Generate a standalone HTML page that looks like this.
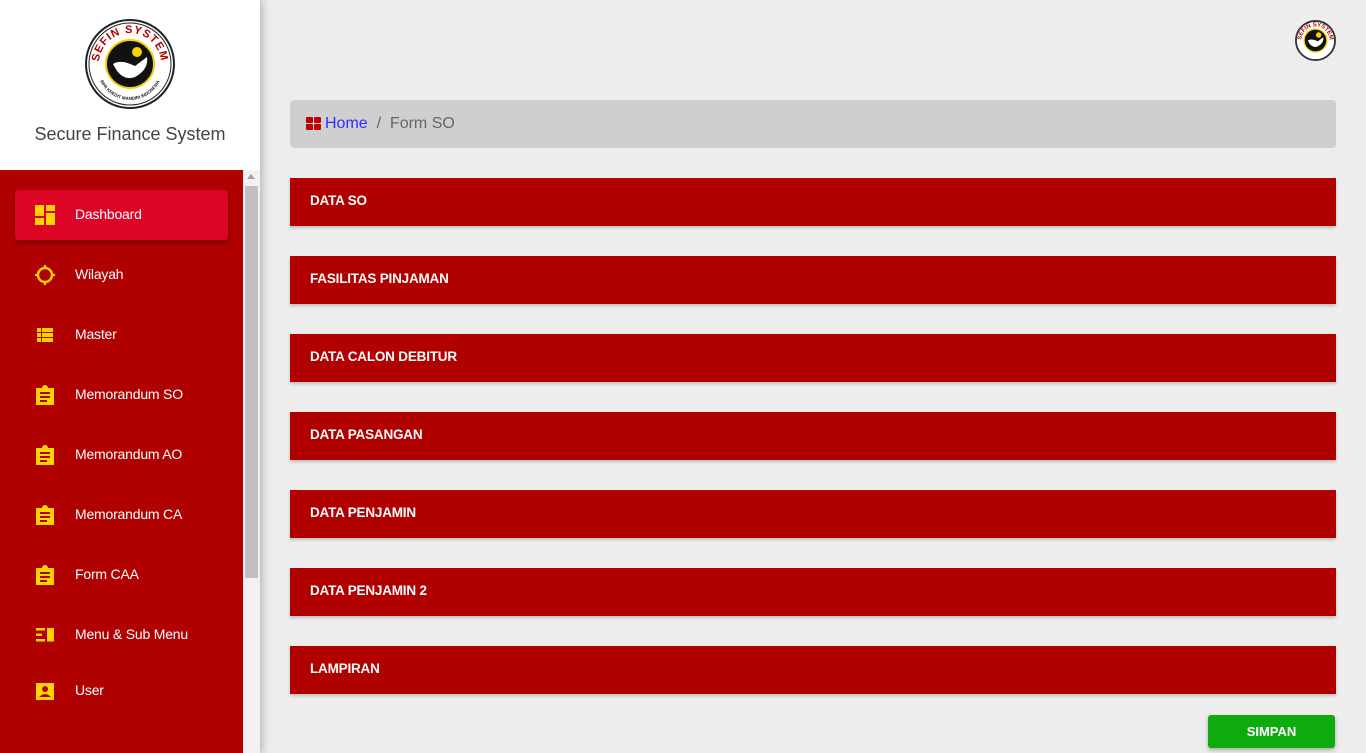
<!DOCTYPE html>
<html><head><meta charset="utf-8">
<style>
*{margin:0;padding:0;box-sizing:border-box}
body{width:1366px;height:753px;overflow:hidden;background:#ededed;font-family:"Liberation Sans",sans-serif;position:relative}
.side{position:absolute;left:0;top:0;width:260px;height:753px;background:#fff;box-shadow:2px 0 8px rgba(0,0,0,.25)}
.title{position:absolute;top:124px;left:0;width:260px;text-align:center;font-size:18px;color:#444}
.menu{position:absolute;top:170px;left:0;width:243px;height:583px;background:#b00000}
.track{position:absolute;top:170px;left:243px;width:17px;height:583px;background:#f1f1f1}
.thumb{position:absolute;top:186px;left:245px;width:13px;height:392px;background:#c1c1c1}
.arrow{position:absolute;top:174px;left:247px;width:0;height:0;border-left:4px solid transparent;border-right:4px solid transparent;border-bottom:5px solid #a3a3a3}
.item{position:absolute;left:15px;width:213px;height:50px;color:#fff;font-size:14px;line-height:48px;padding-left:60px;letter-spacing:-0.2px}
.item.active{background:#dc0525;border-radius:3px;box-shadow:0 3px 5px rgba(0,0,0,.3)}
.item svg{position:absolute;left:20px;top:15px}
.bc{position:absolute;left:290px;top:100px;width:1046px;height:48px;background:#cfcfcf;border-radius:4px;font-size:16px;line-height:48px;padding-left:35px;color:#666}
.bc a{color:#2f2fff;text-decoration:none}
.panel{position:absolute;left:290px;width:1046px;height:48px;background:#b00000;color:#fff;font-weight:bold;font-size:13.5px;line-height:46px;padding-left:20px;box-shadow:0 2px 3px rgba(0,0,0,.2);letter-spacing:-0.2px}
.btn{position:absolute;left:1208px;top:715px;width:127px;height:33px;background:#0eab0e;border-radius:3px;color:#fff;font-weight:bold;font-size:13px;text-align:center;line-height:33px;box-shadow:0 2px 4px rgba(0,0,0,.3)}
</style></head><body>
<div class="side">
<svg style="position:absolute;left:85px;top:19px" width="90" height="90" viewBox="0 0 90 90">
<defs><path id="arc" d="M14 45 A31 31 0 0 1 76 45"/><path id="arc2" d="M12 48 A33 33 0 0 0 78 48"/></defs>
<circle cx="45" cy="45" r="44" fill="#fff" stroke="#222" stroke-width="2"/>
<circle cx="45" cy="45" r="41" fill="none" stroke="#222" stroke-width="1"/>
<circle cx="45" cy="45" r="24" fill="#111" stroke="#f3d400" stroke-width="2"/>
<circle cx="52" cy="33" r="5" fill="#f3d400"/>
<path d="M28 45 Q36 40 50 47 L62 38 Q64 50 50 58 Q40 62 32 52 Z" fill="#fff"/>
<text font-size="11" font-weight="bold" fill="#b00000" font-family="Liberation Sans" letter-spacing="1"><textPath href="#arc" startOffset="50%" text-anchor="middle">SEFIN SYSTEM</textPath></text>
<text font-size="4.5" font-weight="bold" fill="#222" font-family="Liberation Sans"><textPath href="#arc2" startOffset="50%" text-anchor="middle">BPR KREDIT MANDIRI INDONESIA</textPath></text>
</svg>
<div class="title">Secure Finance System</div>
</div>
<div class="menu"></div>
<div class="track"></div><div class="thumb"></div><div class="arrow"></div>

<div class="item active" style="top:190px"><svg width="20" height="20" viewBox="0 0 20 20"><g fill="#ffd400"><rect x="0" y="0" width="9" height="11"/><rect x="11" y="0" width="9" height="6"/><rect x="11" y="8" width="9" height="12"/><rect x="0" y="13" width="9" height="7"/></g></svg>Dashboard</div>
<div class="item" style="top:250px"><svg width="20" height="20" viewBox="0 0 20 20"><circle cx="10" cy="10" r="7" fill="none" stroke="#ffd400" stroke-width="2.4"/><g stroke="#ffd400" stroke-width="2.2"><line x1="10" y1="0" x2="10" y2="3"/><line x1="10" y1="17" x2="10" y2="20"/><line x1="0" y1="10" x2="3" y2="10"/><line x1="17" y1="10" x2="20" y2="10"/></g></svg>Wilayah</div>
<div class="item" style="top:310px"><svg width="20" height="20" viewBox="0 0 20 20"><g fill="#ffd400"><rect x="2" y="3" width="4" height="4"/><rect x="7" y="3" width="11" height="4"/><rect x="2" y="8" width="4" height="4"/><rect x="7" y="8" width="11" height="4"/><rect x="2" y="13" width="4" height="4"/><rect x="7" y="13" width="11" height="4"/></g></svg>Master</div>
<div class="item" style="top:370px"><svg width="20" height="20" viewBox="0 0 20 20"><path d="M1 3h6a3 3 0 0 1 6 0h6v17H1z" fill="#ffd400"/><g fill="#b00000"><rect x="5" y="7" width="10" height="2"/><rect x="5" y="11" width="10" height="2"/><rect x="5" y="15" width="7" height="2"/></g></svg>Memorandum SO</div>
<div class="item" style="top:430px"><svg width="20" height="20" viewBox="0 0 20 20"><path d="M1 3h6a3 3 0 0 1 6 0h6v17H1z" fill="#ffd400"/><g fill="#b00000"><rect x="5" y="7" width="10" height="2"/><rect x="5" y="11" width="10" height="2"/><rect x="5" y="15" width="7" height="2"/></g></svg>Memorandum AO</div>
<div class="item" style="top:490px"><svg width="20" height="20" viewBox="0 0 20 20"><path d="M1 3h6a3 3 0 0 1 6 0h6v17H1z" fill="#ffd400"/><g fill="#b00000"><rect x="5" y="7" width="10" height="2"/><rect x="5" y="11" width="10" height="2"/><rect x="5" y="15" width="7" height="2"/></g></svg>Memorandum CA</div>
<div class="item" style="top:550px"><svg width="20" height="20" viewBox="0 0 20 20"><path d="M1 3h6a3 3 0 0 1 6 0h6v17H1z" fill="#ffd400"/><g fill="#b00000"><rect x="5" y="7" width="10" height="2"/><rect x="5" y="11" width="10" height="2"/><rect x="5" y="15" width="7" height="2"/></g></svg>Form CAA</div>
<div class="item" style="top:610px"><svg width="20" height="20" viewBox="0 0 20 20"><g fill="#ffd400"><rect x="1" y="3" width="9" height="2.5"/><rect x="1" y="8.5" width="6" height="2.5"/><rect x="1" y="14" width="9" height="2.5"/><rect x="12" y="3" width="7" height="13.5"/></g></svg>Menu &amp; Sub Menu</div>
<div class="item" style="top:666px"><svg width="20" height="20" viewBox="0 0 20 20"><rect x="1" y="2" width="18" height="17" fill="#ffd400"/><circle cx="10" cy="8" r="3" fill="#b00000"/><path d="M4 16q6-6 12 0z" fill="#b00000"/></svg>User</div>

<svg style="position:absolute;left:1295px;top:20px" width="41" height="41" viewBox="0 0 90 90">
<defs><path id="arcb" d="M14 45 A31 31 0 0 1 76 45"/></defs>
<circle cx="45" cy="45" r="43" fill="#fff" stroke="#333" stroke-width="4"/>
<circle cx="45" cy="45" r="25" fill="#111" stroke="#f3d400" stroke-width="3"/>
<circle cx="52" cy="33" r="6" fill="#f3d400"/>
<path d="M28 45 Q36 40 50 47 L62 38 Q64 50 50 58 Q40 62 32 52 Z" fill="#fff"/>
<text font-size="13" font-weight="bold" fill="#b00000" font-family="Liberation Sans"><textPath href="#arcb" startOffset="50%" text-anchor="middle">SEFIN SYSTEM</textPath></text>
</svg>

<div class="bc"><svg style="position:absolute;left:16px;top:17px" width="15" height="13" viewBox="0 0 15 13"><g fill="#c00000"><rect x="0" y="0" width="7" height="6" rx="1"/><rect x="8" y="0" width="7" height="6" rx="1"/><rect x="0" y="7" width="7" height="6" rx="1"/><rect x="8" y="7" width="7" height="6" rx="1"/></g></svg><a>Home</a>&nbsp;&nbsp;/&nbsp;&nbsp;Form SO</div>

<div class="panel" style="top:178px">DATA SO</div>
<div class="panel" style="top:256px">FASILITAS PINJAMAN</div>
<div class="panel" style="top:334px">DATA CALON DEBITUR</div>
<div class="panel" style="top:412px">DATA PASANGAN</div>
<div class="panel" style="top:490px">DATA PENJAMIN</div>
<div class="panel" style="top:568px">DATA PENJAMIN 2</div>
<div class="panel" style="top:646px">LAMPIRAN</div>
<div class="btn">SIMPAN</div>
</body></html>
